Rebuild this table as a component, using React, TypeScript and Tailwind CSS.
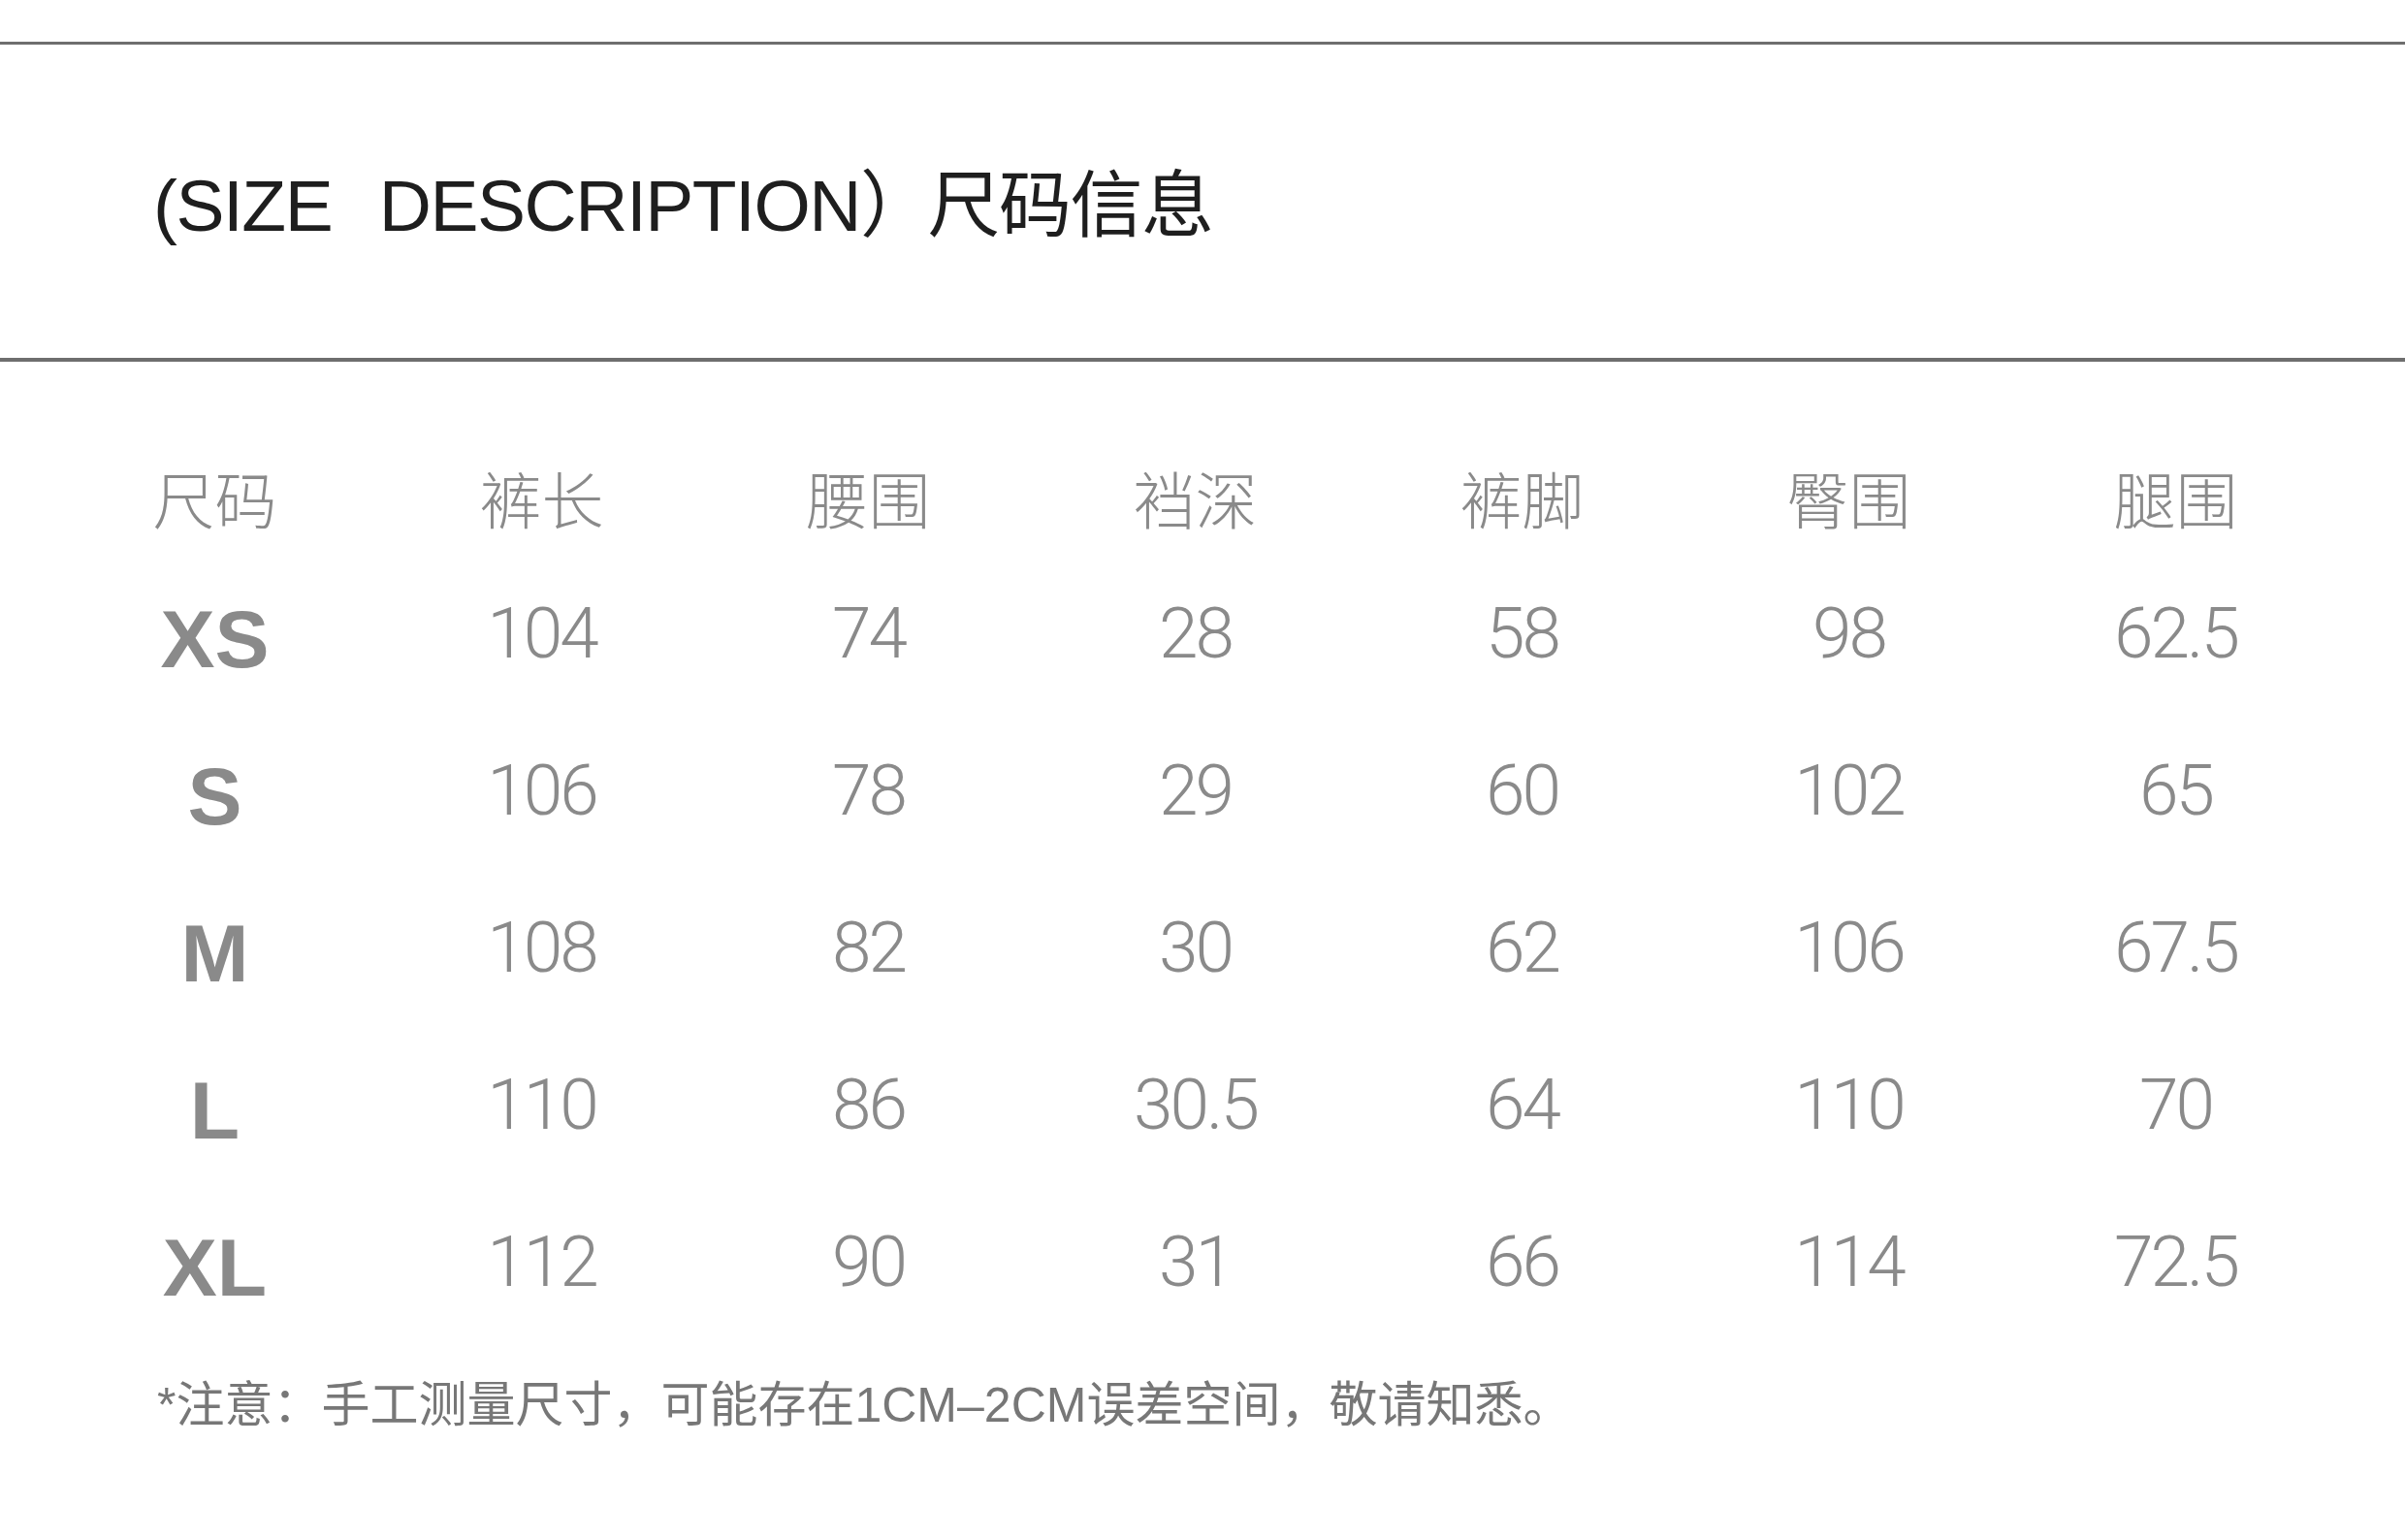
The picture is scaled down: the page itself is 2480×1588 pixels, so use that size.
import React from "react";

const headers = ["尺码", "裤长", "腰围", "裆深", "裤脚", "臀围", "腿围"];

const rows: { size: string; values: string[] }[] = [
  { size: "XS", values: ["104", "74", "28", "58", "98", "62.5"] },
  { size: "S", values: ["106", "78", "29", "60", "102", "65"] },
  { size: "M", values: ["108", "82", "30", "62", "106", "67.5"] },
  { size: "L", values: ["110", "86", "30.5", "64", "110", "70"] },
  { size: "XL", values: ["112", "90", "31", "66", "114", "72.5"] },
];

const cjk = "font-['Liberation_Sans','Noto_Sans_CJK_SC',sans-serif]";

export default function App() {
  return (
    <div className={`w-[2480px] h-[1588px] bg-white overflow-hidden ${cjk}`}>
      {/* top rule */}
      <div className="h-[43px]" />
      <div className="h-[3px] bg-[#6e6e6e]" />

      {/* title */}
      <div className="h-[323px] flex items-center pl-[158px] pt-[10px]">
        <h1 className="text-[75px] leading-none font-normal text-[#1e1e1e] tracking-[-1.5px] whitespace-pre">
          <span className="mr-[10px]">{"(SIZE "}</span>
          {" DESCRIPTION）"}
          <span className="-ml-[4px]">尺码信息</span>
        </h1>
      </div>
      <div className="h-[4px] bg-[#6e6e6e]" />

      {/* table */}
      <div className="pt-[85px] pl-[53px]">
        <div className="grid grid-cols-[repeat(7,337px)]">
          {headers.map((h) => (
            <div
              key={h}
              className="h-[108px] flex items-center justify-center text-[64px] leading-none text-[#8a8a8a] font-light font-['Noto_Sans_CJK_SC',sans-serif]"
            >
              {h}
            </div>
          ))}

          {rows.map((r, ri) => (
            <React.Fragment key={r.size}>
              <div className={`${ri === 0 ? "h-[168px] pt-[18px]" : "h-[162px] pt-[12px]"} flex items-center justify-center`}>
                <span className="text-[84px] leading-none font-bold text-[#8a8a8a] font-['Liberation_Sans',sans-serif]">
                  {r.size}
                </span>
              </div>
              {r.values.map((v, i) => (
                <div
                  key={i}
                  className={`${ri === 0 ? "h-[168px] pt-[6px]" : "h-[162px]"} flex items-center justify-center`}
                >
                  <span className="text-[73px] leading-none font-light text-[#8a8a8a] tracking-[-3px] font-['Roboto','Liberation_Sans',sans-serif]">
                    {v}
                  </span>
                </div>
              ))}
            </React.Fragment>
          ))}
        </div>
      </div>

      {/* note */}
      <p className="mt-[42px] pl-[162px] text-[50px] leading-none text-[#777777] whitespace-nowrap">
        *注意：手工测量尺寸，可能存在1CM–2CM误差空间，敬请知悉。
      </p>
    </div>
  );
}
